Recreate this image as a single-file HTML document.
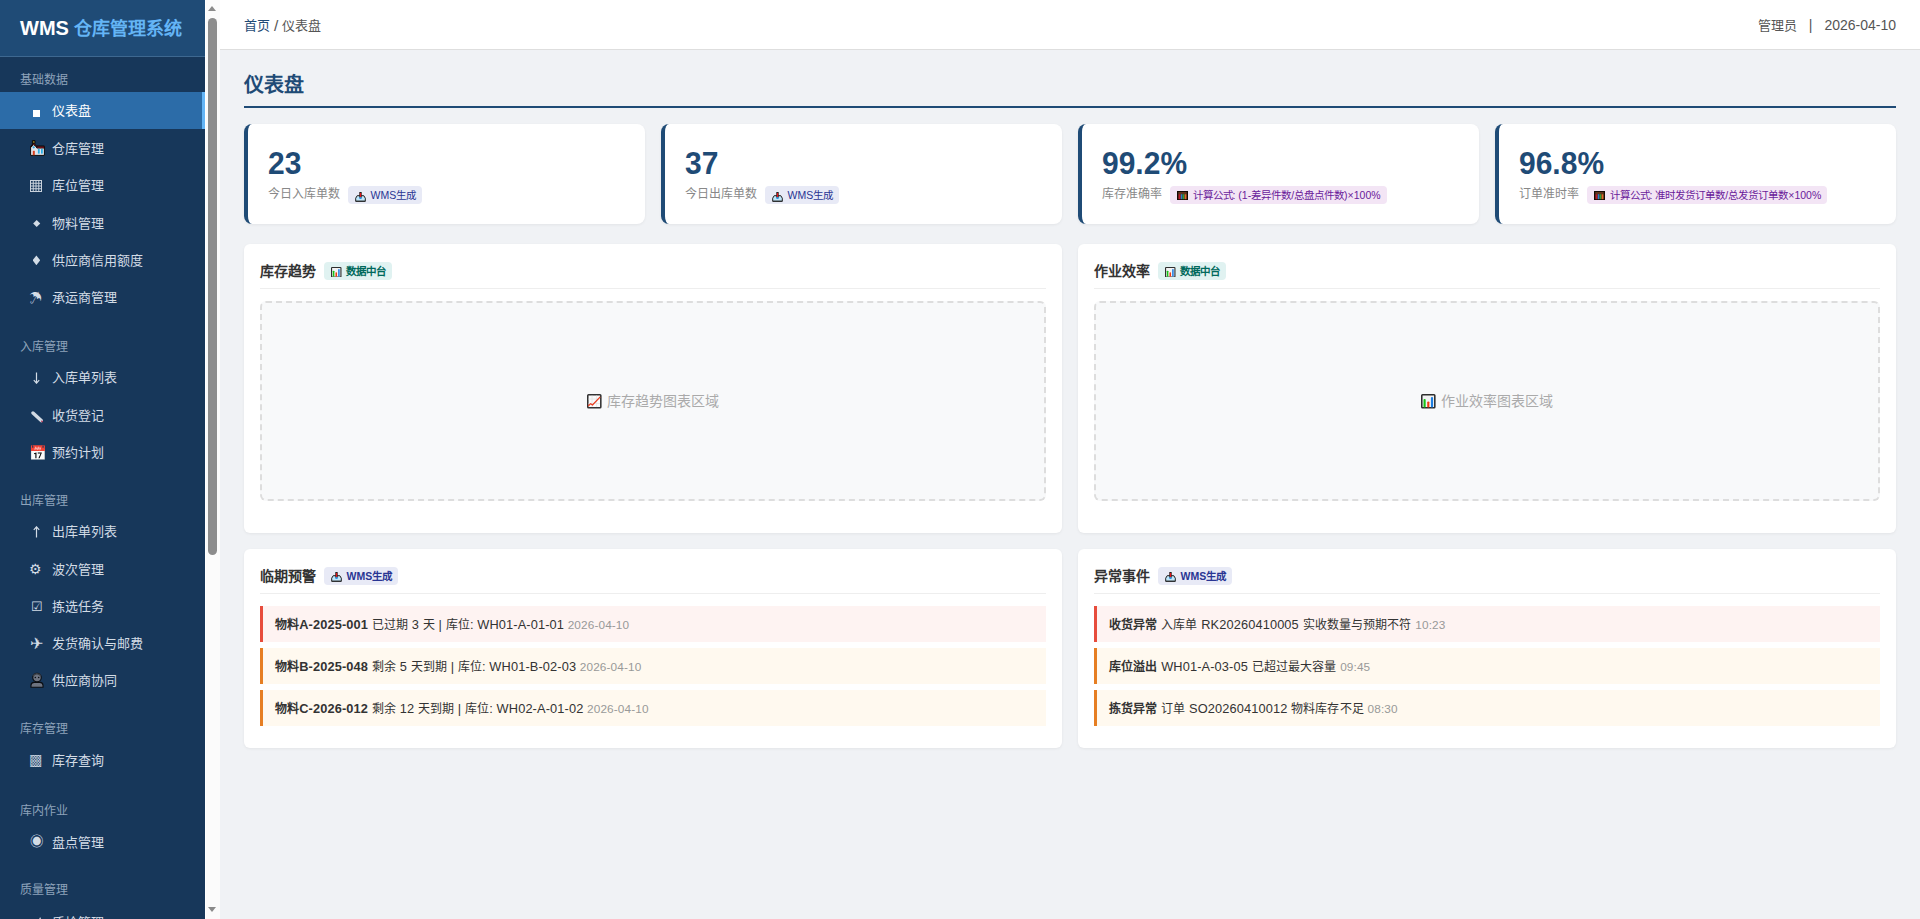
<!DOCTYPE html>
<html lang="zh-CN">
<head>
<meta charset="utf-8">
<title>WMS 仓库管理系统 - 仪表盘</title>
<style>
*{margin:0;padding:0;box-sizing:border-box;}
html,body{width:1920px;height:919px;overflow:hidden;}
body{font-family:"Liberation Sans",sans-serif;background:#f0f2f5;color:#333;position:relative;}
.sb{position:absolute;left:0;top:0;width:205px;height:919px;background:#17375a;overflow:hidden;}
.sb-head{position:absolute;left:0;top:0;width:205px;height:57px;background:#1f4b76;border-bottom:1px solid #3e6890;}
.logo{position:absolute;left:20px;top:13.6px;font-size:20px;font-weight:bold;color:#fff;white-space:nowrap;line-height:28px;}
.logo span{color:#64b5f6;font-size:18px;}
.sec{position:absolute;left:20px;font-size:12px;color:#8ea3ba;line-height:16px;white-space:nowrap;}
.it{position:absolute;left:0;width:205px;height:37px;font-size:13px;color:#d3dce6;white-space:nowrap;}
.ico{position:absolute;line-height:0;color:#d3dce6;}
.ico.g{line-height:1;white-space:nowrap;}
.ico svg{display:block;}
.it .tx{position:absolute;left:52px;top:0;line-height:37px;}
.sqi{display:inline-block;width:7px;height:7px;background:#fff;vertical-align:middle;}
.it.act{background:#2c6ca8;color:#fff;}
.it.act:after{content:"";position:absolute;right:0;top:0;width:3px;height:100%;background:#64b5f6;}
.scr{position:absolute;left:205px;top:0;width:15px;height:919px;background:#fbfbfb;border-left:1px solid #fff;}
.thumb{position:absolute;left:2px;top:18px;width:9px;height:537px;background:#8c8c8c;border-radius:4.5px;}
.arr-up{position:absolute;left:2px;top:6px;width:0;height:0;border-left:4.5px solid transparent;border-right:4.5px solid transparent;border-bottom:5px solid #8a8a8a;}
.arr-dn{position:absolute;left:2px;top:907px;width:0;height:0;border-left:4.5px solid transparent;border-right:4.5px solid transparent;border-top:5px solid #8a8a8a;}
.top{position:absolute;left:220px;top:0;width:1700px;height:50px;background:#fff;border-bottom:1px solid #dedede;}
.crumb{position:absolute;left:24px;top:16px;font-size:13px;line-height:18px;color:#555;white-space:nowrap;}
.sl{font-size:15.5px;margin:0 3.6px 0 4px;position:relative;top:0.5px;}
.crumb b{font-weight:normal;color:#1f4b76;}
.sep{margin:0 12px;font-size:14px;}
.date{font-size:14px;}
.user{position:absolute;right:24px;top:16px;font-size:13px;line-height:18px;color:#555;white-space:nowrap;}
.title{position:absolute;left:244px;top:70px;font-size:20px;font-weight:bold;color:#1f4b76;line-height:30px;}
.uline{position:absolute;left:244px;top:106px;width:1652px;height:2px;background:#1f4b76;}
.card{position:absolute;top:124px;width:401px;height:100px;background:#fff;border-radius:8px;border-left:4px solid #1f4b76;box-shadow:0 1px 3px rgba(0,0,0,0.06);}
.num{position:absolute;left:20px;top:20px;font-size:30px;font-weight:bold;color:#1f4b76;line-height:40px;white-space:nowrap;transform:scaleY(1.035);transform-origin:0 30.3px;}
.lbl{position:absolute;left:20px;top:60px;font-size:12px;color:#888;line-height:20px;white-space:nowrap;}
.badge{display:inline-block;vertical-align:top;margin-left:8px;margin-top:2px;padding:0 6px 0 7px;height:18px;line-height:18px;font-size:10.5px;border-radius:4px;}
.badge em{font-style:normal;display:inline-block;vertical-align:middle;margin-right:4.5px;position:relative;top:0.3px;}
.badge em svg{display:block;}
.ci{display:inline-block;vertical-align:middle;margin-right:5px;position:relative;top:-1px;}
.ci svg{display:block;}
.b-wms{background:#e8eaf6;color:#283593;}
.b-dc{background:#e0f2f1;color:#00695c;font-weight:bold;}
.b-f{background:#f3e5f5;color:#6a1b9a;}
.panel{position:absolute;width:818px;background:#fff;border-radius:6px;box-shadow:0 1px 3px rgba(0,0,0,0.06);}
.ph{position:absolute;left:16px;top:16px;right:16px;height:29px;border-bottom:1px solid #eee;}
.pt{position:absolute;left:0;top:-0.5px;font-size:14px;font-weight:bold;color:#333;line-height:22px;white-space:nowrap;}
.chart{position:absolute;left:16px;top:57px;width:786px;height:200px;border:2px dashed #ddd;border-radius:6px;background:#f8f9fa;color:#aaa;font-size:14px;}
.chart div{position:absolute;left:0;right:0;top:87px;text-align:center;line-height:22px;}
.al{position:absolute;left:16px;width:786px;height:36px;border-left:3px solid #e74c3c;background:#fef3f2;font-size:12.8px;line-height:34px;padding-top:2px;letter-spacing:0.12px;color:#333;padding-left:12px;white-space:nowrap;}
.al.w{border-left-color:#e67e22;background:#fff9ef;}
.al b{font-weight:bold;}
.al i{font-style:normal;color:#999;font-size:11.8px;}
.al .z{font-size:12px;}
.al i .z{font-size:11px;}
</style>
</head>
<body>
<div class="sb">
  <div class="sec" style="top:72.06px">基础数据</div>
  <div class="it act" style="top:92.35px"><span class="tx">仪表盘</span></div>
  <div class="it" style="top:129.75px"><span class="tx">仓库管理</span></div>
  <div class="it" style="top:167.15px"><span class="tx">库位管理</span></div>
  <div class="it" style="top:204.55px"><span class="tx">物料管理</span></div>
  <div class="it" style="top:241.95px"><span class="tx">供应商信用额度</span></div>
  <div class="it" style="top:279.35px"><span class="tx">承运商管理</span></div>
  <div class="sec" style="top:338.80px">入库管理</div>
  <div class="it" style="top:359.45px"><span class="tx">入库单列表</span></div>
  <div class="it" style="top:396.61px"><span class="tx">收货登记</span></div>
  <div class="it" style="top:433.77px"><span class="tx">预约计划</span></div>
  <div class="sec" style="top:493.20px">出库管理</div>
  <div class="it" style="top:513.35px"><span class="tx">出库单列表</span></div>
  <div class="it" style="top:550.51px"><span class="tx">波次管理</span></div>
  <div class="it" style="top:587.67px"><span class="tx">拣选任务</span></div>
  <div class="it" style="top:624.83px"><span class="tx">发货确认与邮费</span></div>
  <div class="it" style="top:661.99px"><span class="tx">供应商协同</span></div>
  <div class="sec" style="top:721.30px">库存管理</div>
  <div class="it" style="top:742.45px"><span class="tx">库存查询</span></div>
  <div class="sec" style="top:802.50px">库内作业</div>
  <div class="it" style="top:823.65px"><span class="tx">盘点管理</span></div>
  <div class="sec" style="top:882.40px">质量管理</div>
  <div class="it" style="top:903.85px"><span class="tx">质检管理</span></div>
  <div class="ico" style="left:32.80px;top:109.60px"><span style="display:block;width:7px;height:7px;background:#fff"></span></div>
  <div class="ico" style="left:30.20px;top:140.40px"><svg width="15" height="16" viewBox="0 0 15 16"><g stroke="#0b0b0b" stroke-width="1" stroke-linejoin="round"><rect x="2.4" y="0.6" width="2.6" height="3" fill="#8a7420"/><path d="M0.6 15.4V6.4L3.7 3.1L6.8 6.2H14.4V15.4Z" fill="#dfe3ea"/><path d="M0.6 6.6L3.7 3.1L6.9 6.6V7.4L3.7 4.6L0.6 7.4Z" fill="#d01a28"/><path d="M6.8 6.2H14.2L14.4 8H6.8Z" fill="#d01a28"/></g><rect x="2.8" y="10.8" width="2" height="4.4" fill="#d8401e"/><circle cx="3.7" cy="7.3" r="1.1" fill="#27a9e3"/><rect x="7.9" y="9" width="1.8" height="4.6" fill="#2aaee6"/><rect x="11" y="9" width="1.8" height="4.6" fill="#2aaee6"/></svg></div>
  <div class="ico" style="left:29.70px;top:179.80px"><svg width="12" height="12" viewBox="0 0 12 12"><g fill="none" stroke="#c9d2dc" stroke-width="1"><rect x="0.5" y="0.5" width="11" height="11"/><path d="M3.25 0.5V11.5M6 0.5V11.5M8.75 0.5V11.5M0.5 3.25H11.5M0.5 6H11.5M0.5 8.75H11.5"/></g></svg></div>
  <div class="ico" style="left:32.60px;top:219.60px"><span style="display:block;width:5.4px;height:5.4px;background:#d3dce6;transform:rotate(45deg);margin:1.1px"></span></div>
  <div class="ico" style="left:32.60px;top:255.40px"><span style="display:block;width:7.6px;height:9.8px;background:#d3dce6;clip-path:polygon(50% 0,100% 50%,50% 100%,0 50%)"></span></div>
  <div class="ico g" style="left:29.00px;top:290.50px;font-size:13.06px">☂</div>
  <div class="ico" style="left:33.10px;top:372.10px"><svg width="7" height="12" viewBox="0 0 7 12"><path d="M3.5 0.5V11M0.8 8.2L3.5 11.2L6.2 8.2" fill="none" stroke="#d3dce6" stroke-width="1.2"/></svg></div>
  <div class="ico" style="left:31.00px;top:410.50px"><svg width="13" height="12" viewBox="0 0 13 12"><path d="M2 2L10.2 9.6" stroke="#d2dae3" stroke-width="3.4" stroke-linecap="round"/><path d="M10.4 9.8L11.6 10.9" stroke="#b03050" stroke-width="1.4"/></svg></div>
  <div class="ico g" style="left:28.50px;top:446.10px;font-size:14.28px">📅</div>
  <div class="ico" style="left:33.10px;top:525.90px"><svg width="7" height="12" viewBox="0 0 7 12"><path d="M3.5 11.5V1M0.8 3.8L3.5 0.8L6.2 3.8" fill="none" stroke="#d3dce6" stroke-width="1.2"/></svg></div>
  <div class="ico g" style="left:29.20px;top:562.80px;font-size:13.66px">⚙</div>
  <div class="ico g" style="left:30.80px;top:600.10px;font-size:13.28px">☑</div>
  <div class="ico g" style="left:29.90px;top:636.00px;font-size:15.72px">✈</div>
  <div class="ico" style="left:29.70px;top:672.30px"><svg width="14" height="16" viewBox="0 0 14 16"><g stroke="#0a0d12" stroke-width="1.1"><path d="M1 15.2V13.2Q1 10.6 4 10.4H10Q13 10.6 13 13.2V15.2Z" fill="#6d7380"/><circle cx="7" cy="5.6" r="4.3" fill="#6d7380"/></g><path d="M3 4.2Q4.5 1.6 7 1.8Q9.6 1.8 10.8 4" stroke="#3a3f47" stroke-width="1.4" fill="none"/><circle cx="5.3" cy="5.6" r="0.75" fill="#0a0d12"/><circle cx="8.7" cy="5.6" r="0.75" fill="#0a0d12"/></svg></div>
  <div class="ico g" style="left:28.50px;top:754.60px;font-size:13.42px">▩</div>
  <div class="ico g" style="left:29.90px;top:835.10px;font-size:13.5px">◉</div>
  <div class="ico" style="left:38.20px;top:916.80px"><svg width="4" height="4" viewBox="0 0 4 4"><path d="M0 4L2.2 0L4 4Z" fill="#c8d0da"/></svg></div>
  <div class="sb-head"><div class="logo">WMS <span>仓库管理系统</span></div></div>
</div>
<div class="scr"><div class="arr-up"></div><div class="thumb"></div><div class="arr-dn"></div></div>

<div class="top">
  <div class="crumb"><b>首页</b><span class="sl">/</span>仪表盘</div>
  <div class="user">管理员<span class="sep">|</span><span class="date">2026-04-10</span></div>
</div>

<div class="title">仪表盘</div>
<div class="uline"></div>

<div class="card" style="left:244px"><div class="num">23</div><div class="lbl">今日入库单数<span class="badge b-wms"><em><svg class="si" width="11" height="10" viewBox="0 0 11 10"><path d="M0.7 9.4V6.2L2.2 3.7H8.8L10.3 6.2V9.4Z" fill="#bfe6fa" stroke="#1d1d1d" stroke-width="1"/><path d="M0.9 9H10.1" stroke="#333" stroke-width="0.8"/><path d="M5.5 0.6V5" stroke="#222" stroke-width="2.4" stroke-linecap="round"/><path d="M5.5 1V5.2" stroke="#e01318" stroke-width="1.3"/><ellipse cx="5.5" cy="6" rx="1.4" ry="0.9" fill="#2f8fdc"/></svg></em>WMS生成</span></div></div>
<div class="card" style="left:661px"><div class="num">37</div><div class="lbl">今日出库单数<span class="badge b-wms"><em><svg class="si" width="11" height="10" viewBox="0 0 11 10"><path d="M0.7 9.4V6.2L2.2 3.7H8.8L10.3 6.2V9.4Z" fill="#bfe6fa" stroke="#1d1d1d" stroke-width="1"/><path d="M0.9 9H10.1" stroke="#333" stroke-width="0.8"/><path d="M5.5 0.6V5" stroke="#222" stroke-width="2.4" stroke-linecap="round"/><path d="M5.5 1V5.2" stroke="#e01318" stroke-width="1.3"/><ellipse cx="5.5" cy="6" rx="1.4" ry="0.9" fill="#2f8fdc"/></svg></em>WMS生成</span></div></div>
<div class="card" style="left:1078px"><div class="num">99.2%</div><div class="lbl">库存准确率<span class="badge b-f"><em><svg class="si" style="position:relative;top:-1px" width="11" height="9" viewBox="0 0 11 9"><rect x="0.5" y="0.5" width="10" height="8" fill="#3b2414" stroke="#140a04" stroke-width="1"/><rect x="1.6" y="3.2" width="1.9" height="5" fill="#c0182a"/><rect x="3.8" y="3.2" width="1.6" height="5" fill="#2a7fcb"/><rect x="5.7" y="3.2" width="1.6" height="5" fill="#2f9f38"/><rect x="7.6" y="3.2" width="1.8" height="5" fill="#e0672a"/><rect x="1.6" y="1.4" width="7.8" height="1.2" fill="#8a4a2a" opacity="0.8"/></svg></em>计算公式: (1-差异件数/总盘点件数)×100%</span></div></div>
<div class="card" style="left:1495px"><div class="num">96.8%</div><div class="lbl">订单准时率<span class="badge b-f"><em><svg class="si" style="position:relative;top:-1px" width="11" height="9" viewBox="0 0 11 9"><rect x="0.5" y="0.5" width="10" height="8" fill="#3b2414" stroke="#140a04" stroke-width="1"/><rect x="1.6" y="3.2" width="1.9" height="5" fill="#c0182a"/><rect x="3.8" y="3.2" width="1.6" height="5" fill="#2a7fcb"/><rect x="5.7" y="3.2" width="1.6" height="5" fill="#2f9f38"/><rect x="7.6" y="3.2" width="1.8" height="5" fill="#e0672a"/><rect x="1.6" y="1.4" width="7.8" height="1.2" fill="#8a4a2a" opacity="0.8"/></svg></em>计算公式: 准时发货订单数/总发货订单数×100%</span></div></div>

<div class="panel" style="left:244px;top:244px;height:289px">
  <div class="ph"><div class="pt">库存趋势<span class="badge b-dc"><em><svg class="si" width="10.5" height="10.5" viewBox="0 0 15 15"><rect x="0.8" y="0.8" width="13.4" height="13.4" rx="0.8" fill="#f3f3f3" stroke="#2e2e2e" stroke-width="1.6"/><rect x="2.6" y="5.2" width="2.2" height="8.6" rx="1" fill="#16c216"/><rect x="6.4" y="7.6" width="2.2" height="6.2" rx="1" fill="#f23a12"/><rect x="10.2" y="3" width="2.2" height="10.8" rx="1" fill="#1c7fe2"/></svg></em>数据中台</span></div></div>
  <div class="chart"><div><i class="ci"><svg class="si" width="14.6" height="14.6" viewBox="0 0 15 15"><rect x="0.8" y="0.8" width="13.4" height="13.4" rx="0.8" fill="#fbfbfb" stroke="#333" stroke-width="1.6"/><path d="M5.2 1.6v11.8M9.8 1.6v11.8M1.6 5.2h11.8M1.6 9.8h11.8" stroke="#e3e3e3" stroke-width="0.7"/><path d="M1.2 12.4L3.8 9.9L5.6 11.3L13.6 3" fill="none" stroke="#ea3f22" stroke-width="1.3" stroke-linejoin="round"/></svg></i>库存趋势图表区域</div></div>
</div>
<div class="panel" style="left:1078px;top:244px;height:289px">
  <div class="ph"><div class="pt">作业效率<span class="badge b-dc"><em><svg class="si" width="10.5" height="10.5" viewBox="0 0 15 15"><rect x="0.8" y="0.8" width="13.4" height="13.4" rx="0.8" fill="#f3f3f3" stroke="#2e2e2e" stroke-width="1.6"/><rect x="2.6" y="5.2" width="2.2" height="8.6" rx="1" fill="#16c216"/><rect x="6.4" y="7.6" width="2.2" height="6.2" rx="1" fill="#f23a12"/><rect x="10.2" y="3" width="2.2" height="10.8" rx="1" fill="#1c7fe2"/></svg></em>数据中台</span></div></div>
  <div class="chart"><div><i class="ci"><svg class="si" width="14.6" height="14.6" viewBox="0 0 15 15"><rect x="0.8" y="0.8" width="13.4" height="13.4" rx="0.8" fill="#f3f3f3" stroke="#2e2e2e" stroke-width="1.6"/><rect x="2.6" y="5.2" width="2.2" height="8.6" rx="1" fill="#16c216"/><rect x="6.4" y="7.6" width="2.2" height="6.2" rx="1" fill="#f23a12"/><rect x="10.2" y="3" width="2.2" height="10.8" rx="1" fill="#1c7fe2"/></svg></i>作业效率图表区域</div></div>
</div>

<div class="panel" style="left:244px;top:549px;height:199px">
  <div class="ph"><div class="pt">临期预警<span class="badge b-wms"><em><svg class="si" width="11" height="10" viewBox="0 0 11 10"><path d="M0.7 9.4V6.2L2.2 3.7H8.8L10.3 6.2V9.4Z" fill="#bfe6fa" stroke="#1d1d1d" stroke-width="1"/><path d="M0.9 9H10.1" stroke="#333" stroke-width="0.8"/><path d="M5.5 0.6V5" stroke="#222" stroke-width="2.4" stroke-linecap="round"/><path d="M5.5 1V5.2" stroke="#e01318" stroke-width="1.3"/><ellipse cx="5.5" cy="6" rx="1.4" ry="0.9" fill="#2f8fdc"/></svg></em>WMS生成</span></div></div>
  <div class="al" style="top:57px"><b><span class="z">物料</span>A-2025-001</b> <span class="z">已过期</span> 3 <span class="z">天</span> | <span class="z">库位</span>: WH01-A-01-01 <i>2026-04-10</i></div>
  <div class="al w" style="top:99px"><b><span class="z">物料</span>B-2025-048</b> <span class="z">剩余</span> 5 <span class="z">天到期</span> | <span class="z">库位</span>: WH01-B-02-03 <i>2026-04-10</i></div>
  <div class="al w" style="top:141px"><b><span class="z">物料</span>C-2026-012</b> <span class="z">剩余</span> 12 <span class="z">天到期</span> | <span class="z">库位</span>: WH02-A-01-02 <i>2026-04-10</i></div>
</div>
<div class="panel" style="left:1078px;top:549px;height:199px">
  <div class="ph"><div class="pt">异常事件<span class="badge b-wms"><em><svg class="si" width="11" height="10" viewBox="0 0 11 10"><path d="M0.7 9.4V6.2L2.2 3.7H8.8L10.3 6.2V9.4Z" fill="#bfe6fa" stroke="#1d1d1d" stroke-width="1"/><path d="M0.9 9H10.1" stroke="#333" stroke-width="0.8"/><path d="M5.5 0.6V5" stroke="#222" stroke-width="2.4" stroke-linecap="round"/><path d="M5.5 1V5.2" stroke="#e01318" stroke-width="1.3"/><ellipse cx="5.5" cy="6" rx="1.4" ry="0.9" fill="#2f8fdc"/></svg></em>WMS生成</span></div></div>
  <div class="al" style="top:57px"><b><span class="z">收货异常</span></b> <span class="z">入库单</span> RK20260410005 <span class="z">实收数量与预期不符</span> <i>10:23</i></div>
  <div class="al w" style="top:99px"><b><span class="z">库位溢出</span></b> WH01-A-03-05 <span class="z">已超过最大容量</span> <i>09:45</i></div>
  <div class="al w" style="top:141px"><b><span class="z">拣货异常</span></b> <span class="z">订单</span> SO20260410012 <span class="z">物料库存不足</span> <i>08:30</i></div>
</div>

</body>
</html>
